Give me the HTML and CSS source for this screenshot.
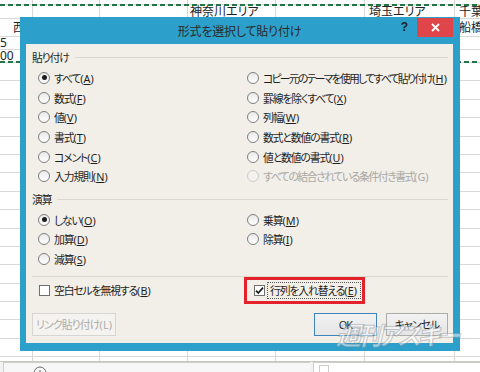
FILE: index.html
```html
<!DOCTYPE html>
<html lang="ja">
<head>
<meta charset="UTF-8">
<meta name="viewport" content="width=device-width, initial-scale=1.0">
<title>形式を選択して貼り付け</title>
<link rel="stylesheet" href="styles.css">
</head>
<body>

<div class="sheet">
    <div class="sheet-row h5"></div>
    <div class="sheet-row h14">
        <span></span><span></span><span></span>
        <span class="cell">神奈川エリア</span><span></span>
        <span class="cell">埼玉エリア</span>
        <span class="cell">千葉</span>
    </div>
    <div class="sheet-row h18">
        <span class="cell west">西</span><span></span><span></span><span></span><span></span><span></span>
        <span class="cell">船橋</span>
    </div>
    <div class="sheet-row h13"><span class="cell num">5</span></div>
    <div class="sheet-row h13"><span class="cell num">00</span></div>
    <div class="sheet-row"></div>
    <div class="sheet-row"></div>
    <div class="sheet-row"></div>
    <div class="sheet-row"></div>
    <div class="sheet-row"></div>
    <div class="sheet-row"></div>
    <div class="sheet-row"></div>
    <div class="sheet-row"></div>
    <div class="sheet-row"></div>
    <div class="sheet-row"></div>
    <div class="sheet-row"></div>
    <div class="sheet-row"></div>
    <div class="sheet-row"></div>
    <div class="sheet-row"></div>
    <div class="sheet-row"></div>
    <div class="sheet-row"></div>

    <div class="marquee"></div>
</div>

<div class="tabbar">
    <div class="tab-area">
        <svg class="add-sheet" width="14" height="14" viewBox="0 0 14 14">
            <circle cx="7" cy="7" r="6" fill="none" stroke="#6b6b6b" stroke-width="1"/>
            <path d="M7 4v6M4 7h6" stroke="#6b6b6b" stroke-width="1"/>
        </svg>
    </div>
    <div class="hscroll"><span class="scroll-btn"></span></div>
</div>

<div class="dialog">
    <div class="titlebar">
        <span class="title">形式を選択して貼り付け</span>
        <div class="controls">
            <span class="help">?</span>
            <span class="close">
                <svg width="9" height="9" viewBox="0 0 9 9">
                    <path d="M1 1l7 7M8 1l-7 7" stroke="#fff" stroke-width="1.8"/>
                </svg>
            </span>
        </div>
    </div>

    <div class="body">
        <div class="group-head"><span>貼り付け</span></div>
        <div class="options">
            <label class="opt"><span class="radio checked"></span><span>すべて<span class="key">(<u>A</u>)</span></span></label>
            <label class="opt"><span class="radio"></span><span class="long">コピー元のテーマを使用してすべて貼り付け<span class="key">(<u>H</u>)</span></span></label>
            <label class="opt"><span class="radio"></span><span>数式<span class="key">(<u>F</u>)</span></span></label>
            <label class="opt"><span class="radio"></span><span>罫線を除くすべて<span class="key">(<u>X</u>)</span></span></label>
            <label class="opt"><span class="radio"></span><span>値<span class="key">(<u>V</u>)</span></span></label>
            <label class="opt"><span class="radio"></span><span>列幅<span class="key">(<u>W</u>)</span></span></label>
            <label class="opt"><span class="radio"></span><span>書式<span class="key">(<u>T</u>)</span></span></label>
            <label class="opt"><span class="radio"></span><span>数式と数値の書式<span class="key">(<u>R</u>)</span></span></label>
            <label class="opt"><span class="radio"></span><span>コメント<span class="key">(<u>C</u>)</span></span></label>
            <label class="opt"><span class="radio"></span><span>値と数値の書式<span class="key">(<u>U</u>)</span></span></label>
            <label class="opt"><span class="radio"></span><span>入力規則<span class="key">(<u>N</u>)</span></span></label>
            <label class="opt disabled"><span class="radio"></span><span class="long-2">すべての結合されている条件付き書式<span class="key">(G)</span></span></label>
        </div>

        <div class="group-head ops-head"><span>演算</span></div>
        <div class="options">
            <label class="opt"><span class="radio checked"></span><span>しない<span class="key">(<u>O</u>)</span></span></label>
            <label class="opt"><span class="radio"></span><span>乗算<span class="key">(<u>M</u>)</span></span></label>
            <label class="opt"><span class="radio"></span><span>加算<span class="key">(<u>D</u>)</span></span></label>
            <label class="opt"><span class="radio"></span><span>除算<span class="key">(<u>I</u>)</span></span></label>
            <label class="opt"><span class="radio"></span><span>減算<span class="key">(<u>S</u>)</span></span></label>
        </div>

        <div class="separator"></div>

        <div class="checks">
            <label class="check"><span class="box"></span><span>空白セルを無視する<span class="key">(<u>B</u>)</span></span></label>
            <label class="check highlight">
                <span class="box">
                    <svg width="9" height="9" viewBox="0 0 9 9">
                        <path d="M1 4.6l2.3 2.4L8 1.6" fill="none" stroke="#1f1f1f" stroke-width="1.7"/>
                    </svg>
                </span>
                <span class="focus">行列を入れ替える<span class="key">(<u>E</u>)</span></span>
            </label>
        </div>

        <div class="buttons">
            <button class="btn link" disabled>リンク貼り付け<span class="key">(L)</span></button>
            <span class="spacer"></span>
            <button class="btn ok">OK</button>
            <button class="btn cancel">キャンセル</button>
        </div>
    </div>
</div>

<div class="watermark">週刊アスキー</div>

</body>
</html>
```

FILE: styles.css
```css
body {
    margin: 0;
    padding: 0;
    width: 480px;
    height: 372px;
    overflow: hidden;
    position: relative;
    background-color: #fff;
    font-family: "Noto Sans", "Noto Sans CJK JP", sans-serif;
    font-feature-settings: "palt";
    color: #1e1e1e;
}

u {
    text-decoration-thickness: 1px;
    text-underline-offset: 1px;
}

.key {
    letter-spacing: 0.1px;
}

/* spreadsheet behind the dialog */
.sheet {
    position: relative;
    height: 361px;
    overflow: hidden;
    background-color: #fff;
    background-image:
        linear-gradient(#dad8d4, #dad8d4),
        linear-gradient(#dad8d4, #dad8d4),
        linear-gradient(#dad8d4, #dad8d4),
        linear-gradient(#dad8d4, #dad8d4),
        linear-gradient(#dad8d4, #dad8d4),
        linear-gradient(#dad8d4, #dad8d4);
    background-size: 1px 100%;
    background-repeat: no-repeat;
    background-position: 32px 0, 99px 0, 187px 0, 275px 0, 364px 0, 454px 0;
}

.sheet-row {
    display: grid;
    grid-template-columns: 33px 67px 88px 89px 90px 90px 1fr;
    height: 17.4px;
    border-bottom: 1px solid #dad8d4;
    font-size: 12px;
    line-height: 1;
    color: #222;
}

.sheet-row.h5 { height: 4px; }
.sheet-row.h14 { height: 13px; }
.sheet-row.h18 { height: 17px; }
.sheet-row.h13 { height: 12px; }

.cell {
    display: flex;
    align-items: center;
    padding-left: 2px;
    white-space: nowrap;
}

.cell.west { padding-left: 13px; }
.cell.num { padding-left: 0; }

.marquee {
    position: absolute;
    left: 0;
    right: 0;
    top: 4px;
    height: 59px;
    background:
        repeating-linear-gradient(90deg, #237447 0 5px, transparent 5px 8px) top / 100% 2px no-repeat,
        repeating-linear-gradient(90deg, #237447 0 5px, transparent 5px 8px) bottom / 100% 2px no-repeat;
}

.tabbar {
    display: flex;
    height: 11px;
    border-top: 1px solid #c9c7c3;
    background-color: #f3f3f3;
}

.tab-area {
    width: 306px;
    margin-left: 3px;
    border-left: 1px solid #cfcdc9;
    border-top: 1px solid #cfcdc9;
    background-color: #f7f7f7;
}

.add-sheet {
    margin: 3px 0 0 29px;
}

.hscroll {
    flex: 1;
    margin-left: 3px;
    border-left: 1px solid #cfcdc9;
    border-top: 1px solid #cfcdc9;
    background-color: #fff;
}

.scroll-btn {
    display: block;
    width: 8px;
    height: 9px;
    margin: 2px 0 0 5px;
    border: 1px solid #cfcdc9;
    border-bottom: none;
}

/* dialog window */
.dialog {
    position: absolute;
    left: 20px;
    top: 17px;
    width: 427px;
    padding: 0 7px 8px 6px;
    background-color: #2ca0cb;
}

.titlebar {
    position: relative;
    height: 27px;
    display: flex;
    align-items: center;
    justify-content: center;
}

.title {
    font-size: 12px;
    color: #2a2a2a;
    letter-spacing: -0.2px;
}

.controls {
    position: absolute;
    right: 0;
    top: 1px;
    display: flex;
    align-items: flex-start;
}

.help {
    font-size: 12px;
    font-weight: bold;
    color: #202020;
    margin-right: 9px;
    line-height: 19px;
    font-family: "Liberation Sans", sans-serif;
}

.close {
    width: 36px;
    height: 19px;
    display: flex;
    align-items: center;
    justify-content: center;
    background-color: #e04549;
}

.body {
    height: 299px;
    padding: 2px 5px 0 6px;
    box-sizing: border-box;
    background-color: #f2efe9;
    font-size: 10.8px;
    letter-spacing: -1.1px;
    display: flex;
    flex-direction: column;
}

.long {
    letter-spacing: -1.7px;
}

.long-2 {
    letter-spacing: -1.4px;
}

.group-head {
    height: 22px;
    display: flex;
    align-items: center;
    gap: 6px;
    flex-shrink: 0;
}

.group-head::after {
    content: "";
    flex: 1;
    border-top: 1px solid #dcd8d0;
    margin-top: 1px;
}

.ops-head {
    margin-top: 1.8px;
}

.options {
    display: grid;
    grid-template-columns: 209px 1fr;
    grid-auto-rows: 19.7px;
    padding-left: 6px;
}

.opt {
    display: flex;
    align-items: center;
    gap: 4px;
    white-space: nowrap;
}

.opt.disabled {
    color: #a9a7a3;
}

.radio {
    width: 10px;
    height: 10px;
    border: 1px solid #7e7e7e;
    border-radius: 50%;
    background: linear-gradient(#e9e9e9, #ffffff);
    display: flex;
    align-items: center;
    justify-content: center;
    flex-shrink: 0;
}

.radio.checked::after {
    content: "";
    width: 5px;
    height: 5px;
    border-radius: 50%;
    background-color: #1c1c1c;
}

.disabled .radio {
    border-color: #cdcbc7;
    background: #f3f1ed;
}

.separator {
    margin-top: 7px;
    border-top: 1px solid #dcd8d0;
    flex-shrink: 0;
}

.checks {
    display: grid;
    grid-template-columns: 205px 1fr;
    height: 27px;
    align-items: center;
    padding-left: 7px;
}

.check {
    display: flex;
    align-items: center;
    gap: 4px;
    white-space: nowrap;
}

.box {
    width: 9px;
    height: 9px;
    border: 1px solid #6f6f6f;
    background-color: #fff;
    display: flex;
    align-items: center;
    justify-content: center;
    flex-shrink: 0;
}

.check.highlight {
    width: 121px;
    height: 27px;
    box-sizing: border-box;
    border: 3px solid #e3222b;
    padding-left: 7px;
    gap: 2px;
}

.focus {
    border: 1px dotted #555;
    padding: 0 3px 0 2px;
    line-height: 15px;
}

.buttons {
    display: flex;
    margin-top: 9px;
    height: 23px;
}

.spacer {
    flex: 1;
}

.btn {
    height: 23px;
    font-family: inherit;
    font-feature-settings: "palt";
    font-size: 10.8px;
    letter-spacing: -0.8px;
    white-space: nowrap;
    padding: 0;
    border: 1px solid #acacac;
    background: linear-gradient(#f2f2f2, #e6e6e6);
    color: #1e1e1e;
}

.btn.link {
    width: 84px;
    border-color: #d8d6d2;
    background: #f4f3f0;
    color: #aeaca8;
}

.btn.ok {
    width: 63px;
    margin-right: 9px;
    border-color: #3c84ba;
}

.btn.cancel {
    width: 62px;
}

.watermark {
    position: absolute;
    left: 336px;
    top: 316px;
    font-family: "Noto Sans CJK JP", sans-serif;
    font-size: 25px;
    font-weight: bold;
    font-style: italic;
    letter-spacing: -4px;
    color: rgba(255, 255, 255, 0.5);
    -webkit-text-stroke: 1px rgba(110, 120, 130, 0.4);
}
```
